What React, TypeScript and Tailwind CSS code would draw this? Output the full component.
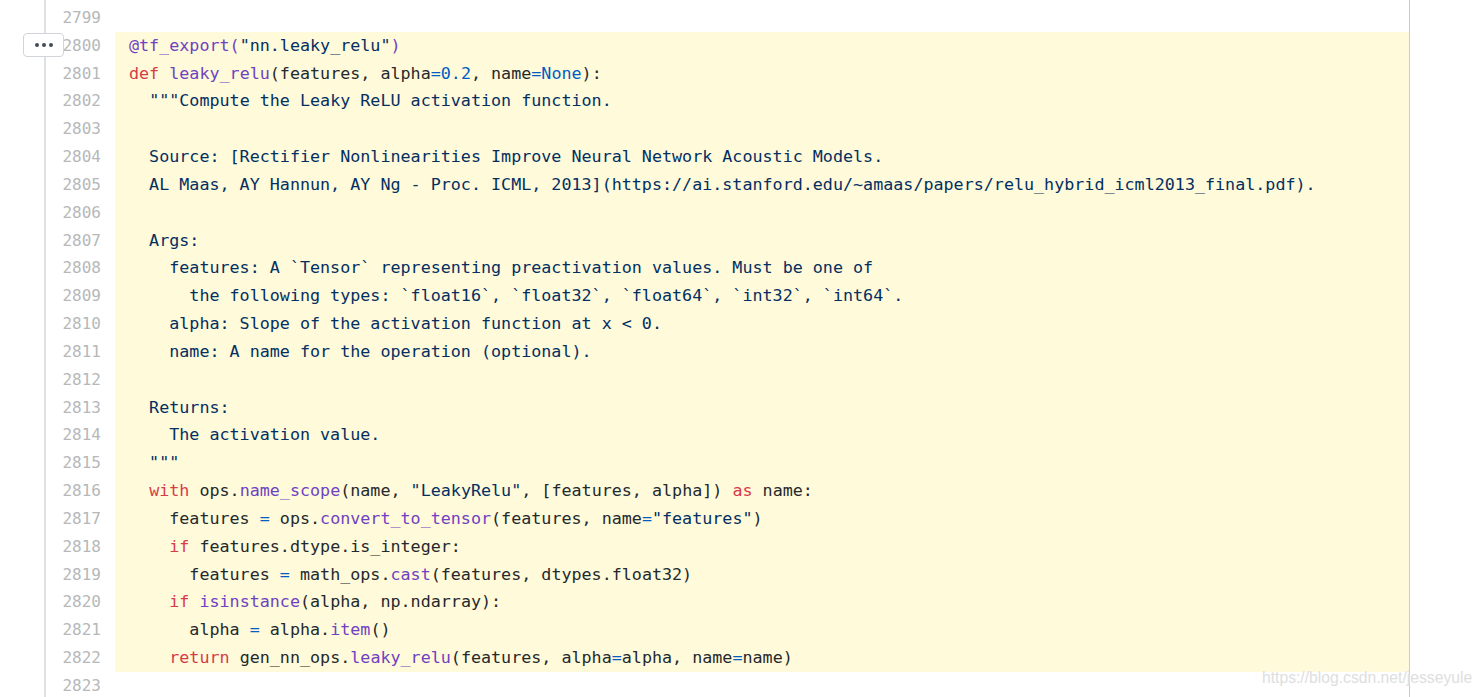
import React from "react";

type Tok = [string, string?];

const K = "text-[#d73a49]";
const F = "text-[#6f42c1]";
const C = "text-[#005cc5]";
const S = "text-[#032f62]";

const lines: { n: number; hl: boolean; toks: Tok[] }[] = [
  { n: 2799, hl: false, toks: [] },
  { n: 2800, hl: true, toks: [["@tf_export(", F], ['"nn.leaky_relu"', S], [")", F]] },
  {
    n: 2801,
    hl: true,
    toks: [
      ["def", K],
      [" "],
      ["leaky_relu", F],
      ["(features, alpha"],
      ["=", C],
      ["0.2", C],
      [", name"],
      ["=", C],
      ["None", C],
      ["):"],
    ],
  },
  { n: 2802, hl: true, toks: [["  "], ['"""Compute the Leaky ReLU activation function.', S]] },
  { n: 2803, hl: true, toks: [] },
  { n: 2804, hl: true, toks: [["  Source: [Rectifier Nonlinearities Improve Neural Network Acoustic Models.", S]] },
  {
    n: 2805,
    hl: true,
    toks: [["  AL Maas, AY Hannun, AY Ng - Proc. ICML, 2013](https://ai.stanford.edu/~amaas/papers/relu_hybrid_icml2013_final.pdf).", S]],
  },
  { n: 2806, hl: true, toks: [] },
  { n: 2807, hl: true, toks: [["  Args:", S]] },
  { n: 2808, hl: true, toks: [["    features: A `Tensor` representing preactivation values. Must be one of", S]] },
  { n: 2809, hl: true, toks: [["      the following types: `float16`, `float32`, `float64`, `int32`, `int64`.", S]] },
  { n: 2810, hl: true, toks: [["    alpha: Slope of the activation function at x < 0.", S]] },
  { n: 2811, hl: true, toks: [["    name: A name for the operation (optional).", S]] },
  { n: 2812, hl: true, toks: [] },
  { n: 2813, hl: true, toks: [["  Returns:", S]] },
  { n: 2814, hl: true, toks: [["    The activation value.", S]] },
  { n: 2815, hl: true, toks: [['  """', S]] },
  {
    n: 2816,
    hl: true,
    toks: [
      ["  "],
      ["with", K],
      [" ops."],
      ["name_scope", F],
      ["(name, "],
      ['"LeakyRelu"', S],
      [", [features, alpha]) "],
      ["as", K],
      [" name:"],
    ],
  },
  {
    n: 2817,
    hl: true,
    toks: [
      ["    features "],
      ["=", C],
      [" ops."],
      ["convert_to_tensor", F],
      ["(features, name"],
      ["=", C],
      ['"features"', S],
      [")"],
    ],
  },
  { n: 2818, hl: true, toks: [["    "], ["if", K], [" features.dtype.is_integer:"]] },
  {
    n: 2819,
    hl: true,
    toks: [["      features "], ["=", C], [" math_ops."], ["cast", F], ["(features, dtypes.float32)"]],
  },
  { n: 2820, hl: true, toks: [["    "], ["if", K], [" "], ["isinstance", F], ["(alpha, np.ndarray):"]] },
  { n: 2821, hl: true, toks: [["      alpha "], ["=", C], [" alpha."], ["item", F], ["()"]] },
  {
    n: 2822,
    hl: true,
    toks: [
      ["    "],
      ["return", K],
      [" gen_nn_ops."],
      ["leaky_relu", F],
      ["(features, alpha"],
      ["=", C],
      ["alpha, name"],
      ["=", C],
      ["name)"],
    ],
  },
  { n: 2823, hl: false, toks: [] },
];

export default function App() {
  return (
    <div className="relative w-[1483px] h-[697px] bg-white overflow-hidden">
      <div
        className="ml-[44px] w-[1366px] h-[697px] border-l-2 border-l-[#dfe2e5] border-r border-r-[#c9cbce] pt-[4px]"
        style={{ fontFamily: '"DejaVu Sans Mono", "Liberation Mono", monospace' }}
      >
        {lines.map((l) => (
          <div key={l.n} className="flex h-[27.83px]">
            <div className="w-[69px] shrink-0 pr-[14px] text-right text-[16px] leading-[27.83px] text-[#b6b8ba]">
              {l.n}
            </div>
            <div
              className={
                "flex-1 pl-[14px] whitespace-pre text-[16.72px] leading-[27.83px] text-[#24292e] " +
                (l.hl ? "bg-[#fffad9]" : "")
              }
            >
              {l.toks.map((t, i) => (
                <span key={i} className={t[1] ?? ""}>
                  {t[0]}
                </span>
              ))}
            </div>
          </div>
        ))}
      </div>
      <div className="absolute left-[23px] top-[33px] w-[41px] h-[24px] bg-white border border-[#d1d5da] rounded-[4px] flex items-center justify-center gap-[3px]">
        <span className="w-[4px] h-[4px] rounded-full bg-[#444d56]" />
        <span className="w-[4px] h-[4px] rounded-full bg-[#444d56]" />
        <span className="w-[4px] h-[4px] rounded-full bg-[#444d56]" />
      </div>
      <div
        className="absolute left-[1262px] top-[668px] whitespace-nowrap text-[15.7px] leading-[20px] text-[#dedede]"
        style={{ fontFamily: '"Liberation Sans", Arial, sans-serif', textShadow: "0 0 1px #ffffff" }}
      >
        https://blog.csdn.net/jesseyule
      </div>
    </div>
  );
}
